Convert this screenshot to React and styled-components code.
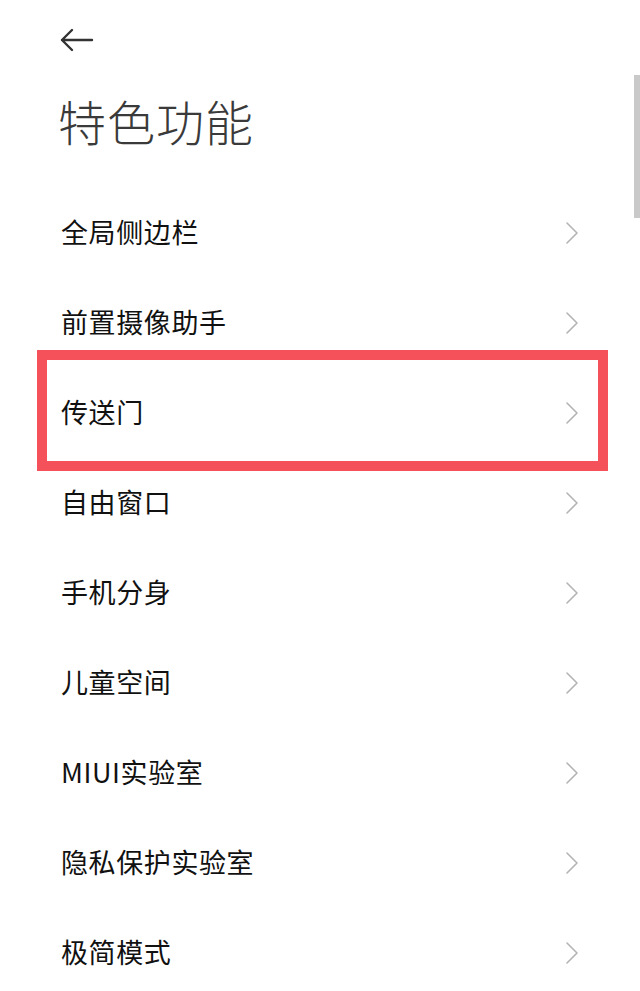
import React from 'react';
import styled, { createGlobalStyle } from 'styled-components';

const GlobalStyle = createGlobalStyle`
  html, body {
    margin: 0;
    padding: 0;
    background: #ffffff;
  }
  body {
    font-family: "Noto Sans CJK SC", "Noto Sans", sans-serif;
  }
`;

const Page = styled.div`
  position: relative;
  width: 640px;
  height: 991px;
  overflow: hidden;
  background: #ffffff;
`;

const TopBar = styled.div`
  height: 80px;
  display: flex;
  align-items: center;
  padding: 0 0 0 60px;
`;

const Title = styled.h1`
  margin: 0;
  height: 108px;
  padding: 0 0 28px 58px;
  box-sizing: border-box;
  display: flex;
  align-items: center;
  font-size: 48px;
  font-weight: 300;
  color: #3a3a3a;
  letter-spacing: 1px;
`;

const List = styled.div`
  display: flex;
  flex-direction: column;
`;

const Row = styled.div`
  position: relative;
  height: 90px;
  display: flex;
  align-items: center;
  justify-content: space-between;
  padding: 0 61px 0 61px;
`;

const Label = styled.span`
  font-size: 27px;
  color: #111111;
  font-weight: 400;
  letter-spacing: 0.6px;
  margin-top: -4px;
`;

const Highlight = styled.div`
  position: absolute;
  left: 37px;
  top: -18px;
  width: 571px;
  height: 121px;
  box-sizing: border-box;
  border: 10px solid #f4515b;
  pointer-events: none;
`;

const ScrollThumb = styled.div`
  position: absolute;
  right: 0;
  top: 75px;
  width: 6px;
  height: 143px;
  background: #c9c9c9;
`;

const BackArrow = () => (
  <svg width="34" height="24" viewBox="0 0 34 24" fill="none">
    <path d="M2 12 H32 M12 2 L2 12 L12 22" stroke="#333" strokeWidth="2.4" strokeLinecap="round" strokeLinejoin="round" />
  </svg>
);

const Chevron = () => (
  <svg width="14" height="22" viewBox="0 0 14 22" fill="none">
    <path d="M2 1 L12 11 L2 21" stroke="#b4b4b4" strokeWidth="1.6" strokeLinecap="round" strokeLinejoin="round" />
  </svg>
);

const items = [
  '全局侧边栏',
  '前置摄像助手',
  '传送门',
  '自由窗口',
  '手机分身',
  '儿童空间',
  'MIUI实验室',
  '隐私保护实验室',
  '极简模式',
];

export default function App() {
  return (
    <Page>
      <GlobalStyle />
      <TopBar>
        <BackArrow />
      </TopBar>
      <Title>特色功能</Title>
      <List>
        {items.map((label, i) => (
          <Row key={label}>
            <Label>{label}</Label>
            <Chevron />
            {i === 2 && <Highlight />}
          </Row>
        ))}
      </List>
      <ScrollThumb />
    </Page>
  );
}
